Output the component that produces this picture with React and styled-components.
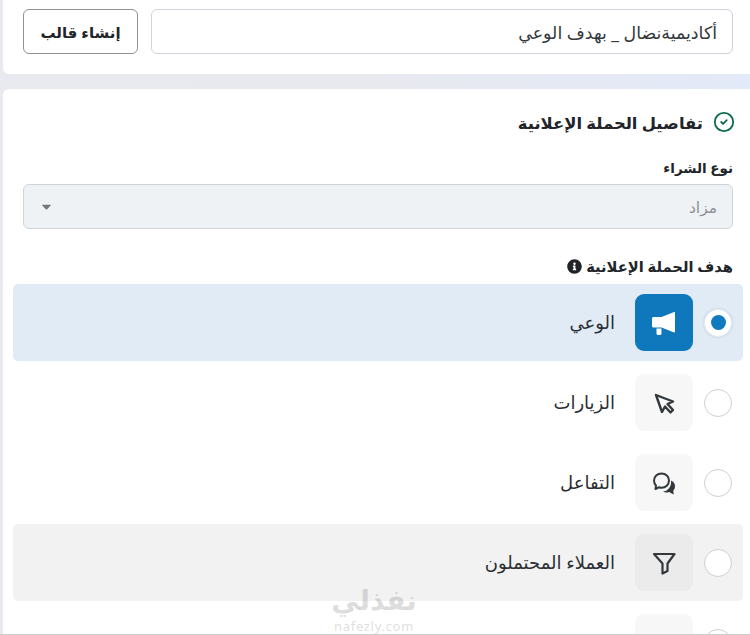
import React from 'react'
import styled, { createGlobalStyle } from 'styled-components'
import { FaInfoCircle, FaCaretDown } from 'react-icons/fa'
import { LuCircleCheck } from 'react-icons/lu'

const Global = createGlobalStyle`
  html, body { margin: 0; padding: 0; height: 635px; overflow: hidden; background: #fff; }
  * { box-sizing: border-box; }
  body { font-family: "Noto Sans", "DejaVu Sans", sans-serif; color: #212529; }
`

const Page = styled.div`
  position: relative;
  height: 635px;
  overflow: hidden;
  direction: rtl;
  padding-left: 3px;
  background: linear-gradient(90deg, #e9e9f0 0%, #e8e9ef 50%, #e2e9f8 100%);

  &::after {
    content: '';
    position: absolute;
    left: 0;
    right: 0;
    bottom: 0;
    height: 1px;
    background: #cfcfcf;
  }
`

const TopPanel = styled.section`
  height: 74px;
  background: #fff;
  border-radius: 0 0 0 6px;
  padding: 9px 17px 0 20px;
  display: flex;
  gap: 13px;
`

const TextInput = styled.div`
  flex: 1;
  height: 45px;
  border: 1px solid #ced4da;
  border-radius: 6px;
  padding: 0 15px;
  display: flex;
  align-items: center;
  font-size: 17.4px;
  color: #33383d;
`

const TemplateButton = styled.button`
  width: 115px;
  height: 45px;
  background: #fff;
  border: 1px solid #8f9396;
  border-radius: 6px;
  font: 700 15px "Noto Sans", "DejaVu Sans", sans-serif;
  color: #212529;
`

const DetailsPanel = styled.section`
  margin-top: 15px;
  height: 546px;
  background: #fff;
  border-radius: 6px 0 0 0;
  padding: 0 17px 0 20px;
  overflow: hidden;
`

const Title = styled.h2`
  margin: 0;
  padding-top: 4px;
  height: 62px;
  display: flex;
  align-items: center;
  gap: 10px;
  font-size: 16.4px;
  font-weight: 700;
  color: #212529;

  svg { color: #0f6b4f; font-size: 22px; margin-right: -2px; }
`

const FieldLabel = styled.label`
  height: 33px;
  display: flex;
  align-items: center;
  gap: 4px;
  padding-bottom: ${({ $lift }) => $lift || 0}px;
  font-size: ${({ $size }) => $size || 13.5}px;
  font-weight: 600;
  color: #212529;

  svg { font-size: 15px; }
`

const SelectBox = styled.div`
  height: 45px;
  background: #eff2f5;
  border: 1px solid #ced4da;
  border-radius: 6px;
  padding: 0 15px;
  display: flex;
  align-items: center;
  justify-content: space-between;
  font-size: 15.5px;
  color: #8b9096;
  margin-bottom: 22px;

  svg { color: #74777c; font-size: 15px; }
`

const GoalList = styled.div`
  margin: 0 -10px;
  display: flex;
  flex-direction: column;
  gap: 3px;
`

const Goal = styled.div`
  height: 77px;
  flex: none;
  display: flex;
  align-items: center;
  padding: 0 11px;
  border-radius: 5px;
  background: ${({ $state }) =>
    $state === 'active' ? '#e1ebf5' : $state === 'hover' ? '#f2f2f2' : '#fff'};
`

const Radio = styled.span`
  width: 28px;
  height: 28px;
  flex: none;
  border-radius: 50%;
  background: #fff;
  border: 1px solid ${({ $on }) => ($on ? '#e4edf5' : '#cfcfcf')};
  display: flex;
  align-items: center;
  justify-content: center;
  box-shadow: ${({ $on }) => ($on ? '0 0 3px rgba(0,0,0,.12)' : 'none')};

  &::after {
    content: '';
    width: 15px;
    height: 15px;
    border-radius: 50%;
    background: ${({ $on }) => ($on ? '#0f7abf' : 'transparent')};
  }
`

const IconTile = styled.span`
  width: 58px;
  height: 57px;
  flex: none;
  margin: 0 11px 0 20px;
  border-radius: 9px;
  display: flex;
  align-items: center;
  justify-content: center;
  color: ${({ $state }) => ($state === 'active' ? '#fff' : '#33383d')};
  background: ${({ $state }) =>
    $state === 'active' ? '#0f78bd' : $state === 'hover' ? '#ebebeb' : '#f7f7f7'};
`

const GoalName = styled.span`
  font-size: 18px;
  padding-bottom: 2px;
  color: #2b2f33;
`

const Mark = styled.div`
  position: absolute;
  left: 328px;
  top: 585px;
  width: 92px;
  direction: ltr;
  text-align: center;
  color: rgba(120, 120, 120, 0.25);
  font-weight: 700;
`

const MarkName = styled.div`
  font-family: "DejaVu Sans", sans-serif;
  font-size: 28px;
  line-height: 32px;
`

const MarkSite = styled.div`
  font-size: 13px;
  line-height: 18px;
  letter-spacing: 0.7px;
  font-weight: 400;
`

const Megaphone = () => (
  <svg width="24" height="24" viewBox="0 0 24 24" fill="currentColor">
    <path d="M1.500 6H9.500L21.500 1.200C22.300 .9 23 1.300 23 2V20.500C23 21.300 22.300 21.600 21.500 21.300L9.500 16.500H1.500C.7 16.500 0 15.800 0 15V7.500C0 6.700 .7 6 1.500 6z" />
    <path d="M4.500 17.500H9.500V22.500C9.500 23.300 8.900 24 8 24H6C5.200 24 4.500 23.300 4.500 22.500z" />
  </svg>
)

const Pointer = () => (
  <svg width="24" height="24" viewBox="0 0 24 24" fill="none" stroke="currentColor" strokeWidth="2.400" strokeLinejoin="round">
    <path d="M4 4L21 10.500L15.500 13L21 19L18.500 21.500L13 15.500L10 21z" />
  </svg>
)

const Chat = () => (
  <svg width="24" height="24" viewBox="0 0 24 24" fill="none">
    <path d="M2 9.500C2 5.400 5.300 2.500 9.500 2.500S17 5.400 17 9.500 13.700 16.800 9.500 16.800C8.500 16.800 7.600 16.600 6.700 16.300L3.500 18L4 14.500C2.800 13.200 2 11.500 2 9.500z" stroke="currentColor" strokeWidth="2" strokeLinejoin="round" />
    <path d="M19 9.500C21.500 10.500 23 12.500 23 15 23 17 22.300 18.500 21.300 19.500L21.700 23.500 17 21C15 21.800 12.800 21.800 11 20.500 15.500 20.500 20 15.500 19 9.500z" fill="currentColor" />
  </svg>
)

const Funnel = () => (
  <svg width="24" height="24" viewBox="0 0 24 24" fill="none" stroke="currentColor" strokeWidth="2.200" strokeLinejoin="round">
    <path d="M2 3H22.500L15.500 12.500V20L10.500 22.500V12.500z" />
  </svg>
)

const goals = [
  { name: 'الوعي', icon: <Megaphone />, state: 'active' },
  { name: 'الزيارات', icon: <Pointer /> },
  { name: 'التفاعل', icon: <Chat /> },
  { name: 'العملاء المحتملون', icon: <Funnel />, state: 'hover' },
  { name: '', icon: null },
]

export default function App() {
  return (
    <>
      <Global />
      <Page>
        <TopPanel>
          <TextInput>أكاديميةنضال _ بهدف الوعي</TextInput>
          <TemplateButton>إنشاء قالب</TemplateButton>
        </TopPanel>
        <DetailsPanel>
          <Title>
            <LuCircleCheck />
            تفاصيل الحملة الإعلانية
          </Title>
          <FieldLabel>نوع الشراء</FieldLabel>
          <SelectBox>
            مزاد
            <FaCaretDown />
          </SelectBox>
          <FieldLabel $size={14.7} $lift={3}>
            هدف الحملة الإعلانية
            <FaInfoCircle />
          </FieldLabel>
          <GoalList>
            {goals.map((g, i) => (
              <Goal key={i} $state={g.state}>
                <Radio $on={g.state === 'active'} />
                <IconTile $state={g.state}>{g.icon}</IconTile>
                <GoalName>{g.name}</GoalName>
              </Goal>
            ))}
          </GoalList>
        </DetailsPanel>
        <Mark>
          <MarkName>نفذلي</MarkName>
          <MarkSite>nafezly.com</MarkSite>
        </Mark>
      </Page>
    </>
  )
}
